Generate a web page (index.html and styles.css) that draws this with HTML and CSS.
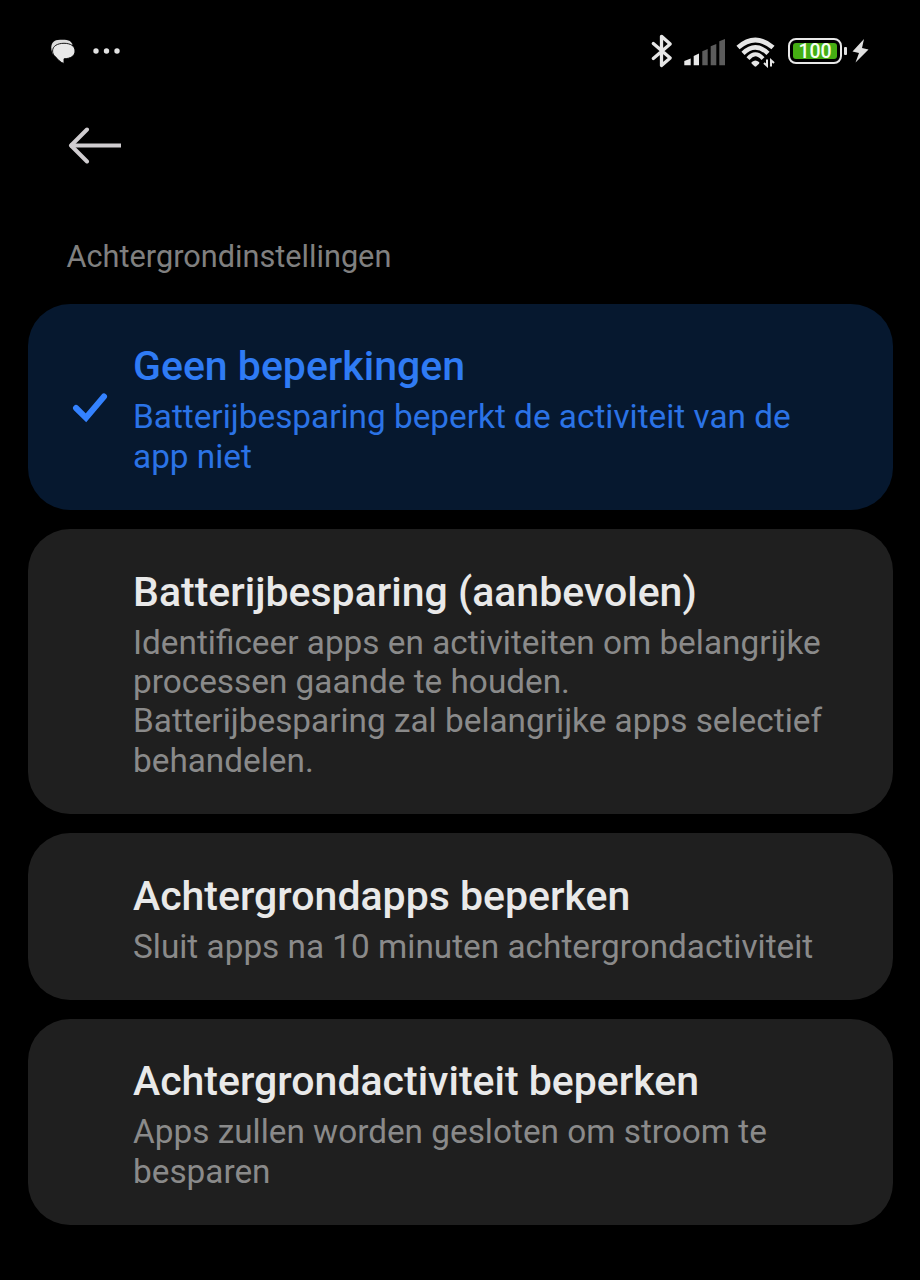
FILE: index.html
```html
<!DOCTYPE html>
<html lang="nl">
<head>
<meta charset="utf-8">
<title>Achtergrondinstellingen</title>
<link rel="stylesheet" href="styles.css">
</head>
<body>
<header class="status">
  <svg class="chat" width="26" height="27" viewBox="0 0 26 27"><path d="M3 16.500C-.5 9 1 1.800 10 1.800c7 0 11 .2 12.500 5z" fill="#dcdcdc"/><path d="M14 5.300c6.500 0 11 2.700 11 7.700S20.500 20.600 14 20.800V25.500C10 24.500 7.500 21 5.500 18.800 3.500 17 2.600 15.500 2.600 13 2.600 8 7.500 5.300 14 5.300z" fill="#e8e8e8" stroke="#000" stroke-width=".9"/></svg>
  <svg class="dots" width="28" height="6" viewBox="0 0 28 6" fill="#e2e2e2"><circle cx="3" cy="3" r="2.700"/><circle cx="13.500" cy="3" r="2.700"/><circle cx="24" cy="3" r="2.700"/></svg>
  <svg class="bluetooth" width="24" height="34" viewBox="0 0 24 34" fill="none" stroke="#e6e6e6" stroke-width="3.300" stroke-linejoin="round" stroke-linecap="round"><path d="M3.300 9.500L20.200 24l-8.700 7.500V2.300L20.200 10 3.300 24.500"/></svg>
  <svg class="signal" width="42" height="28" viewBox="0 0 42 28"><path d="M.3 27.300V23l6.400-2.500v6.800z M9.700 27.300V18l5.300-2.500v11.800z" fill="#e8e8e8"/><path d="M18.300 27.300v-14l5.400-2.300v16.300z M26.700 27.300v-19L32.300 6v21.300z M35.300 27.300v-24L41 1v26.300z" fill="#5c5c5c"/></svg>
  <svg class="wifi" width="42" height="32" viewBox="0 0 42 32"><g fill="none" stroke="#e6e6e6"><path d="M2 11.500Q19.300-3.500 37 11.500" stroke-width="4.800"/><path d="M7 17.300Q19.300 5.500 32 17.300" stroke-width="4.500"/><path d="M12 22.600Q19.300 14 27 22.600" stroke-width="4"/></g><path d="M15.800 26q3.600-3 7.200 0 .8.800 0 1.700l-2.700 2.600q-.9.800-1.800 0l-2.700-2.600q-.8-.9 0-1.700z" fill="#e6e6e6"/><path d="M31 23.500v6.300l-3-2.800M35 30.500v-6.300l3 2.800" fill="none" stroke="#e6e6e6" stroke-width="2"/></svg>
  <div class="battery"><div class="charge">100</div></div>
  <div class="nub"></div>
  <svg class="bolt" width="18" height="24" viewBox="0 0 18 24"><path d="M12 0L.5 12.500l6.500 1.500L3.500 23.500 16.500 10.500 10 9z" fill="#e0e0e0"/></svg>
</header>
<nav class="toolbar">
  <svg width="54" height="38" viewBox="0 0 54 38" fill="none" stroke="#d0cdd0" stroke-width="4" stroke-linecap="round" stroke-linejoin="round"><path d="M20 2.500L4 18.500l16 16"/><path d="M5 18.500h47" stroke-linecap="square"/></svg>
</nav>
<h1 class="heading">Achtergrondinstellingen</h1>
<main class="options">
  <section class="card selected">
    <svg class="check" width="36" height="31" viewBox="0 0 36 31" fill="none" stroke="#3482ff" stroke-width="6" stroke-linecap="round" stroke-linejoin="miter"><path d="M4 16L14 25.800 32 4.500"/></svg>
    <h2>Geen beperkingen</h2>
    <p>Batterijbesparing beperkt de activiteit van de<br>app niet</p>
  </section>
  <section class="card">
    <h2>Batterijbesparing (aanbevolen)</h2>
    <p>Identificeer apps en activiteiten om belangrijke<br>processen gaande te houden.<br>Batterijbesparing zal belangrijke apps selectief<br>behandelen.</p>
  </section>
  <section class="card">
    <h2>Achtergrondapps beperken</h2>
    <p>Sluit apps na 10 minuten achtergrondactiviteit</p>
  </section>
  <section class="card">
    <h2>Achtergrondactiviteit beperken</h2>
    <p>Apps zullen worden gesloten om stroom te<br>besparen</p>
  </section>
</main>
</body>
</html>
```
FILE: styles.css
```css
* { box-sizing: border-box; }
body { margin: 0; height: 1280px; overflow: hidden; background: #000; font-family: Roboto, sans-serif; }
.status { height: 102px; padding: 0 50px; display: flex; align-items: center; }
.status svg, .battery, .nub { flex: none; }
.dots { margin-left: 17px; }
.bluetooth { margin-left: auto; }
.signal { margin-left: 10px; margin-top: 1px; }
.wifi { margin-left: 10px; margin-top: 1px; }
.battery { width: 54px; height: 26px; margin-left: 10px; padding: 3px; border: 2px solid #e8e8e8; border-radius: 8px; }
.charge { height: 16px; border-radius: 3px; background: #45ae13; color: #f4fff0; font-size: 19.500px; font-weight: 500; line-height: 17px; text-align: center; }
.nub { width: 3px; height: 8px; margin-left: 2px; border-radius: 1px; background: #e0e0e0; }
.bolt { margin-left: 5px; }
.toolbar { height: 88px; padding: 25px 67px 0; }
.toolbar svg { display: block; }
.heading { margin: 0; height: 114px; padding: 49px 66.500px 0; color: #808080; font-size: 30.700px; font-weight: 400; line-height: 36px; }
.options { display: grid; gap: 19.400px; padding: 0 27px 0 28px; }
.card { position: relative; padding: 39.400px 0 33.900px 105px; border-radius: 42px; background: #1f1f1f; color: #8a8a8a; white-space: nowrap; }
.card h2 { margin: 0 0 7px; color: #e9e9e9; font-size: 41px; font-weight: 500; line-height: 47px; }
.card p { margin: 0; font-size: 33.350px; line-height: 39.300px; }
.selected { background: #06182f; color: #2b73e6; }
.selected h2 { color: #2f7bf4; }
.check { position: absolute; left: 44px; top: 88px; }
```
